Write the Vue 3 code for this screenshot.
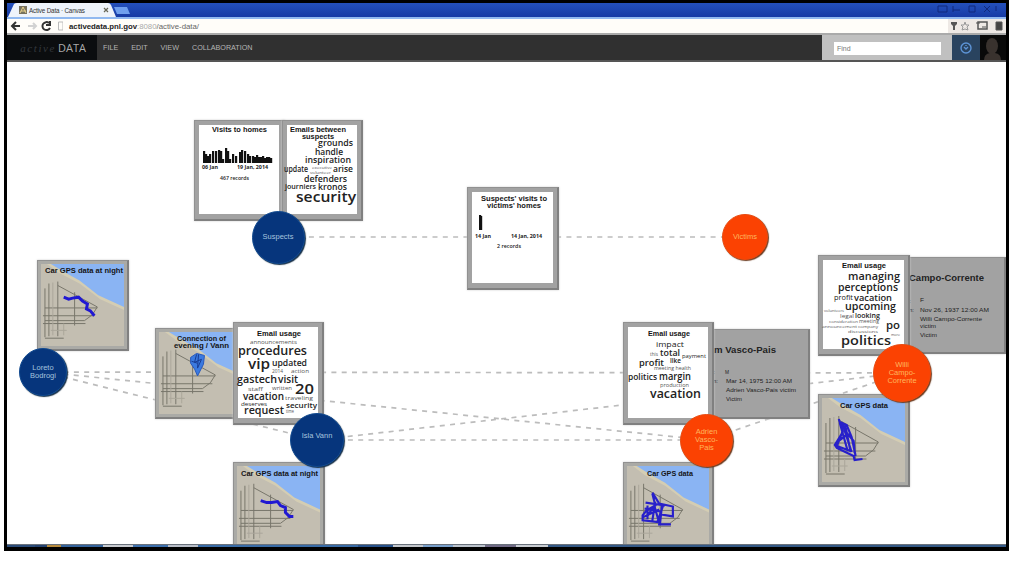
<script setup>
const word = (text, x, y, size, len, weight = 600, tone = '#222') => ({ text, x, y, size, len, weight, tone })
const title = (text, x, y, len, size = 7.2) => word(text, x, y, size, len, 800, '#151515')
const filler = (text, x, y, len, size = 4.5) => word(text, x, y, size, len, 400, '#555')

const cards = [
  {
    id: 'visits', kind: 'paper', box: [194, 120, 91, 101], bars: [
      [203, 12], [205, 9], [207, 7], [209, 9], [212, 12], [215, 12], [218, 13], [220, 12], [222, 4], [225, 15], [227, 12], [229, 4], [232, 9], [235, 7],
      [239, 11], [241, 13], [244, 12], [247, 9], [249, 7], [252, 7], [254, 6], [256, 8], [258, 6], [260, 6], [262, 7], [264, 5], [266, 6], [268, 6], [270, 5]
    ], base: 163,
    words: [
      title('Visits to homes', 212, 132, 55), word('06 Jan', 202, 169, 5, 16, 700), word('19 Jan, 2014', 237, 169, 5, 31, 700),
      word('467 records', 220, 180, 5, 29, 600)
    ]
  },
  {
    id: 'emails', kind: 'paper', box: [282, 120, 81, 101],
    words: [
      title('Emails between', 290, 132, 56), title('suspects', 302, 139, 32), word('grounds', 318, 145.5, 9, 35), word('handle', 315, 154.5, 9, 28),
      word('inspiration', 305, 163, 9, 46), word('update', 284, 172, 8, 24), filler('executive', 312, 169, 20, 4), filler('volunteer', 310, 173.5, 21, 4),
      word('arise', 333, 172, 8.5, 20), word('defenders', 304, 182, 9.5, 43), word('journiers', 285, 189, 7.5, 31), word('kronos', 318, 190, 9, 29),
      word('security', 296, 202, 14.5, 60)
    ]
  },
  {
    id: 'suspect-visits', kind: 'paper', box: [467, 187, 92, 103], bars: [[479, 15], [480, 14]], base: 230,
    words: [
      title("Suspects' visits to", 481, 200.5, 66), title("victims' homes", 487, 207.5, 54), word('14 Jan', 475, 238, 5, 16, 700),
      word('14 Jan, 2014', 511, 238, 5, 31, 700), word('2 records', 497, 248, 5, 24)
    ]
  },
  {
    id: 'night-a', kind: 'map', box: [37, 260, 92, 91], words: [title('Car GPS data at night', 45, 273, 78)],
    trace: 'M27 38l5 2 4-1 6-1 4 4 5 3-1 5 4 2 4 5'
  },
  {
    id: 'connection', kind: 'map', box: [155, 328, 92, 91], words: [title('Connection of', 177, 341, 49), title('evening / Vann', 174, 348, 55)],
    pin: true
  },
  {
    id: 'usage-isla', kind: 'paper', box: [233, 322, 91, 103],
    words: [
      title('Email usage', 257, 335.5, 44), filler('announcements', 250, 344, 47), word('procedures', 238, 355, 12, 69), word('vip', 248, 369, 15, 22),
      word('updated', 272, 365.5, 9, 35), filler('2014', 272, 373, 11), filler('action', 291, 373, 18, 6), word('gastech', 237, 383, 11.5, 40),
      word('visit', 278, 383, 10, 20), filler('staff', 248, 391, 15, 6), filler('written', 272, 390, 20, 6), word('20', 295, 394, 15, 19, 600),
      word('vacation', 243, 400, 10.5, 41), filler('traveling', 285, 400, 28, 6), word('deserves', 241, 406, 5, 26, 500), word('security', 286, 408, 7, 31),
      word('request', 244, 413.5, 10, 40), filler('time', 286, 413, 8)
    ]
  },
  {
    id: 'vasco', kind: 'profile', box: [712, 329, 98, 90],
    words: [
      title('m Vasco-Pais', 714, 353, 62, 8.7), filler(':', 713, 374, 2), filler('M', 725, 374, 4, 6), filler('n:', 713, 382.5, 5),
      filler('Mar 14, 1975 12:00 AM', 726, 382.5, 66, 5.5), filler('Adrien Vasco-Pais victim', 726, 391.5, 70, 5.5), filler('Victim', 726, 401, 16, 5.5)
    ]
  },
  {
    id: 'usage-vasco', kind: 'paper', box: [623, 322, 91, 103],
    words: [
      title('Email usage', 648, 335.5, 42), word('impact', 656, 347, 7.5, 28, 500), word('total', 660, 355.5, 9, 20), filler('this', 650, 356, 8),
      word('profit', 639, 365.5, 9.5, 25), word('like', 670, 362.5, 7, 11), word('payment', 682, 358, 6, 24, 500), filler('meeting health', 654, 370, 37),
      word('politics', 628, 380, 9.5, 29), word('margin', 659, 380, 10, 32), filler('production', 660, 387, 29), word('vacation', 650, 398, 12.5, 51)
    ]
  },
  {
    id: 'campo', kind: 'profile', box: [908, 257, 98, 97],
    words: [
      title('Campo-Corrente', 909, 281, 75, 8.7), filler(':', 909, 303, 2), filler('F', 920, 302, 4, 6), filler('n:', 909, 312, 5),
      filler('Nov 26, 1937 12:00 AM', 920, 312, 69, 5.5), filler('Willi Campo-Corrente', 920, 320.5, 62, 5.5), filler('victim', 920, 328, 16, 5.5), filler('Victim', 920, 337, 17, 5.5)
    ]
  },
  {
    id: 'usage-campo', kind: 'paper', box: [818, 255, 92, 101],
    words: [
      title('Email usage', 842, 268, 44), word('managing', 848, 280, 10.5, 52), word('perceptions', 838, 291, 10.5, 60), word('profit', 834, 300, 7, 19, 500),
      word('vacation', 854, 301, 9.5, 38), word('upcoming', 845, 310, 10.5, 51), filler('volunteers', 824, 312, 20, 4), filler('legal', 840, 318, 14, 6),
      word('looking', 855, 317.5, 7, 25), filler('consideration', 829, 323, 29, 4), filler('meeting', 859, 323, 20, 5), filler('announcement', 822, 328, 35, 4),
      filler('company', 858, 328, 20, 4), word('po', 886, 328.5, 11, 14), filler('discussions', 848, 333, 30, 4), filler('more', 891, 335.5, 9, 4), word('politics', 841, 344.5, 13, 50)
    ]
  },
  {
    id: 'car-campo', kind: 'map', box: [818, 394, 92, 93], words: [title('Car GPS data', 840, 408, 48)], mesh: 'M21 25l4 13-8 13 2 3 17 8 1 4 8-1M22 28l7 3 5 12 4 19M22 29l8 28M27 31l6 26M18 49l12-9 6 7 1 12M25 37l-6 15 14 5M24 28l10 30M28 34l5 24'
  },
  {
    id: 'night-b', kind: 'map', box: [233, 462, 92, 92], words: [title('Car GPS data at night', 241, 475.5, 77)],
    trace: 'M28 39l6 2 5 0 6-1 3 4 5 2 0 5 4 4 4 0'
  },
  {
    id: 'car-vasco', kind: 'map', box: [623, 462, 91, 92], words: [title('Car GPS data', 647, 475.5, 46)],
    mesh: 'M30 31l7 11 14 3 0 10-12-2-2 10 12 0M30 32l3 12-9 5-4 5 0 5 18 2 2-19M23 41l20 3M22 47l16 3M24 56l8-12 5 18M33 40l-3 19M41 44l-6 17M20 56l17-8M25 44l0 14'
  }
]

const nodes = [
  { x: 278, y: 237, r: 26.5, role: 'suspect', lines: ['Suspects'] },
  { x: 745, y: 237, r: 23, role: 'victim', lines: ['Victims'] },
  { x: 43, y: 372, r: 24, role: 'suspect', lines: ['Loreto', 'Bodrogi'] },
  { x: 317, y: 440, r: 27, role: 'suspect', lines: ['Isla Vann', ''] },
  { x: 706.5, y: 440, r: 26.5, role: 'victim', lines: ['Adrien', 'Vasco-', 'Pais'] },
  { x: 902, y: 373, r: 29, role: 'victim', lines: ['Willi', 'Campo-', 'Corrente'] }
]
const edges = [[0, 1], [2, 5], [2, 3], [2, 4], [3, 4], [3, 5], [4, 5]]

// World coordinates start at the top left of the page; the board begins below the nav bar.
const left = 7
const top = 62
const place = ([x, y, w, h]) => ({ left: `${x - left}px`, top: `${y - top}px`, width: `${w}px`, height: `${h}px` })
const disc = (n) => place([n.x - n.r, n.y - n.r, n.r * 2, n.r * 2])
const tasks = [
  [28, '#2a4b78'], [12, '#24426f'], [14, '#b88b3c'], [42, '#34639c'], [30, '#c8cbd0'], [35, '#3d70ad'], [30, '#b9bec8'], [160, '#386ba6'],
  [35, '#27518a'], [30, '#c4c7cc'], [30, '#79a0cc'], [32, '#bcc3cc'], [30, '#706a85'], [32, '#c9cdd2'], [458, '#345986']
]
</script>

<template>
  <div class="window">
    <div class="titlebar">
      <svg class="tabs" width="130" height="14" viewBox="0 0 130 14">
        <path d="M1 14L7 1Q8 0 10 0H101Q103 0 104 2L109 14Z" fill="#eef3fa" />
        <path d="M107 4H120L123 11H110Z" fill="#6f9fee" />
        <path d="M12 3h8v8h-8z" fill="#77725f" /><path d="M13 10l3-6 3 6M14 8h5" stroke="#e8d18b" fill="none" />
        <text x="22" y="10" textLength="56">Active Data · Canvas</text>
        <path d="M97 5l4 4m0-4l-4 4" stroke="#665" stroke-width="1.2" />
      </svg>
      <svg class="controls" width="64" height="10" viewBox="0 0 64 10" fill="none" stroke="#10297c">
        <path d="M2 2h9v6H2zM17 6h7M17 2v6M33 2h6v6h-6zM48 2l6 6m0-6l-6 6M60 2v5" />
      </svg>
    </div>
    <div class="addressbar">
      <svg width="56" height="14" viewBox="0 0 56 14" fill="none" stroke="#333" stroke-width="2">
        <path d="M13 7H5M9 3L5 7l4 4" /><path d="M21 7h8M26 4l3 3-3 3" stroke="#d2d2d2" />
        <path d="M42 4a4 4 0 1 0 1 5M43 2v4h-4" /><path d="M53 3h4.500v8h-4.500z" transform="translate(-1.500 0)" stroke="#bbb" stroke-width="1" />
      </svg>
      <div class="url"><b>activedata.pnl.gov</b><span>:8080</span>/active-data/</div>
      <svg class="tools" width="58" height="14" viewBox="0 0 58 14">
        <path d="M3 3h6v2L7 7v4H5V7L3 5z" fill="#555" /><path d="M17 3l1 3h3l-2 2 1 3-3-1-3 1 1-3-2-2h3z" fill="none" stroke="#999" />
        <path d="M30 3h9v7h-9z" fill="none" stroke="#555" stroke-width="1.5" /><path d="M28 4h4M34 8h4M48 3h6v8h-6z" fill="#444" stroke="#555" />
      </svg>
    </div>
    <nav class="nav">
      <div class="brand"><i>active</i><span>DATA</span></div>
      <div class="menu"><span>FILE</span><span>EDIT</span><span>VIEW</span><span>COLLABORATION</span></div>
      <div class="search"><div class="field">Find</div></div>
      <div class="info">
        <svg width="14" height="14" viewBox="0 0 14 14" fill="none" stroke="#5d94d6" stroke-width="1.4"><circle cx="7" cy="7" r="5" /><path d="M5 6l2 2 2-2M7 4v1" /></svg>
      </div>
      <div class="avatar">
        <svg width="25" height="25" viewBox="0 0 25 25" fill="#39322e"><ellipse cx="12" cy="11" rx="6" ry="8" /><path d="M4 25q0-6 6-7h5q6 1 6 7z" /></svg>
      </div>
    </nav>

    <main class="board">
      <svg class="edges" viewBox="7 62 999 482">
        <line v-for="([a, b], i) in edges" :key="i" :x1="nodes[a].x" :y1="nodes[a].y" :x2="nodes[b].x" :y2="nodes[b].y" />
      </svg>

      <div v-for="c in cards" :key="c.id" class="card" :class="c.kind" :style="place(c.box)">
        <div class="face">
          <svg v-if="c.kind === 'map'" class="map" viewBox="4 4 84 84" preserveAspectRatio="none">
            <path d="M4 4h84v84H4z" fill="#c3beb1" />
            <path d="M10 4H88V51L64 40 43 24 22 13Z" fill="#d4cdb3" />
            <path d="M14 4H88V48L62 36 43 21 27 12Z" fill="#8ab4f3" />
            <g fill="none" stroke="#77756a" stroke-width="1">
              <path d="M21 26l40 22-5 8-8 6H8M8 49h53M6 57h52M12 24v54M8 29v50M21 22v56M38 33v34M6 65h43M8 80h19" />
              <path d="M14 72h16M16 23v54M27 65v12" stroke="#aaa69a" />
            </g>
            <path v-if="c.trace" :d="c.trace" fill="none" stroke="#2018d2" stroke-width="3" />
            <path v-if="c.mesh" :d="c.mesh" fill="none" stroke="#2820ca" stroke-width="2.2" />
            <g v-if="c.pin">
              <path d="M36 30l6-4 8 2-1 9-6 12-3-7-4-6z" fill="#3b7ae0" stroke="#2858ba" /><path d="M42 27l-2 8 7-3-4 9 1-14M37 34l6 2" fill="none" stroke="#173a91" />
            </g>
          </svg>
        </div>
        <svg class="texts" :viewBox="c.box.join(' ')">
          <rect v-for="([x, h], i) in c.bars || []" :key="i" :x="x" :y="c.base - h" width="2.2" :height="h" fill="#111" />
          <text
            v-for="(t, i) in c.words" :key="t.text + i" :x="t.x" :y="t.y" :font-size="t.size" :font-weight="t.weight"
            :textLength="t.len" lengthAdjust="spacingAndGlyphs" :fill="c.kind === 'profile' ? '#222' : t.tone"
            :class="{ title: t.weight === 800 || c.kind === 'profile' }"
          >{{ t.text }}</text>
        </svg>
      </div>

      <div v-for="(n, i) in nodes" :key="i" class="node" :class="n.role" :style="disc(n)">
        <span v-for="(l, k) in n.lines" :key="k">{{ l }}</span>
      </div>
    </main>

    <div class="taskbar">
      <div v-for="([w, color], i) in tasks" :key="i" :style="{ flex: `${w} 0 0`, background: color }"></div>
    </div>
  </div>
</template>

<style>
body { background: #fff; }
</style>

<style scoped>
.window {
  box-sizing: border-box;
  width: 1005px;
  height: 551px;
  margin-left: 4px;
  border: 3px solid #000;
  border-bottom-width: 4px;
  display: flex;
  flex-direction: column;
  overflow: hidden;
  font-family: "Liberation Sans", Arial, sans-serif;
  background: #fff;
}
.titlebar {
  flex: 0 0 14px;
  display: flex;
  justify-content: space-between;
  background: linear-gradient(#2450bb, #163aa5);
}
.tabs text { font-size: 6.3px; fill: #333; }
.controls { margin: 1px 6px 0 0; }
.addressbar {
  flex: 0 0 18px;
  min-height: 0;
  box-sizing: border-box;
  border-top: 2px solid #91b9f0;
  border-bottom: 2px solid #aaa;
  display: flex;
  align-items: center;
  background: #fffdf9;
}
.url { flex: 1; padding-left: 6px; font-size: 7.8px; color: #666; white-space: nowrap; }
.url b { color: #222; }
.url span { color: #aaa; }
.tools { background: #eee9e5; }
.nav {
  box-sizing: border-box;
  flex: 0 0 27px;
  min-height: 0;
  display: flex;
  background: #303030;
  border-bottom: 2px solid #555;
}
.brand {
  width: 90px;
  display: flex;
  align-items: center;
  justify-content: flex-end;
  gap: 2px;
  padding-right: 11px;
  box-sizing: border-box;
  background: #0b0d0f;
  color: #aaa;
  font: 11px "Open Sans", sans-serif;
}
.brand i { font: italic 11px "Liberation Serif", serif; letter-spacing: 1.6px; color: #34383d; }
.menu { flex: 1; display: flex; align-items: center; gap: 13px; padding-left: 6px; font-size: 7.2px; color: #b5b5b5; }
.search { width: 130px; box-sizing: border-box; padding: 7px 11px 5px 12px; background: #c0c0c0; }
.field { height: 13px; padding-left: 3px; background: #fff; font-size: 7px; line-height: 13px; color: #777; }
.info { width: 28px; display: flex; align-items: center; justify-content: center; background: #29435f; }
.avatar { width: 26px; display: flex; align-items: flex-end; background: #090909; }
.board { position: relative; flex: 1; min-height: 0; overflow: hidden; }
.edges { position: absolute; left: 0; top: 0; width: 999px; height: 482px; }
.edges line { stroke: #bcbcbc; stroke-width: 1.7; stroke-dasharray: 5 5.3; }
.card {
  position: absolute;
  box-sizing: border-box;
  padding: 4px 4px 5px;
  background: #a2a2a2;
  border: 1px solid #919191;
  border-right: 2px solid #808080;
  border-bottom: 2px solid #808080;
  box-shadow: 0 0 2px #ccc;
}
.card.map { padding: 3px; background: #aaaaa6; }
.face { height: 100%; background: #fff; }
.profile .face { background: none; }
.map .face { background: #c3beb1; }
svg.map { display: block; width: 100%; height: 100%; }
.texts { position: absolute; left: -1px; top: -1px; width: calc(100% + 3px); height: calc(100% + 3px); overflow: hidden; }
.texts text { font-family: "Open Sans", sans-serif; }
.texts .title { font-family: "Liberation Sans", Arial, sans-serif; }
.node {
  position: absolute;
  box-sizing: border-box;
  border-radius: 50%;
  display: flex;
  flex-direction: column;
  align-items: center;
  justify-content: center;
  font-size: 7.5px;
  line-height: 8px;
  text-align: center;
}
.node span { min-height: 8px; }
.suspect { background: #06357c; border: 1px solid #124b91; box-shadow: 1px 1px 1px #173049; color: #a5c4de; }
.victim { background: #fb4202; border: 1px solid #e94b10; box-shadow: 1px 1px 1px #6c3b20; color: #ffb65e; }
.taskbar { flex: 0 0 3px; display: flex; border-top: 1px solid #69717b; box-sizing: border-box; }
</style>
